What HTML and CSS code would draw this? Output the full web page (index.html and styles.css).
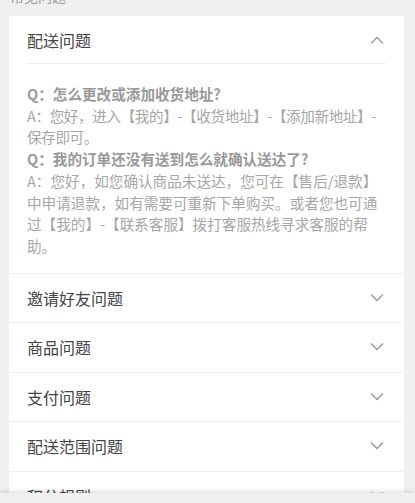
FILE: index.html
```html
<!DOCTYPE html>
<html lang="zh-CN">
<head>
    <meta charset="UTF-8">
    <meta name="viewport" content="width=device-width, initial-scale=1.0">
    <title>常见问题</title>
    <link rel="stylesheet" href="styles.css">
</head>
<body>

    <div class="page">
        <div class="section-title">常见问题</div>

        <div class="faq">
            <div class="faq-item open">
                <div class="faq-head">
                    <span>配送问题</span>
                    <svg class="arrow" viewBox="0 0 14 8"><path d="M1 7.5 L7 1.5 L13 7.5"/></svg>
                </div>
                <div class="faq-body">
                    <p class="q">Q：怎么更改或添加收货地址?</p>
                    <p class="tight">A：您好，进入【我的】-【收货地址】-【添加新地址】-保存即可。</p>
                    <p class="q">Q：我的订单还没有送到怎么就确认送达了?</p>
                    <p>A：您好，如您确认商品未送达，您可在【售后/退款】中申请退款，如有需要可重新下单购买。或者您也可通过【我的】-【联系客服】拨打客服热线寻求客服的帮助。</p>
                </div>
            </div>
            <div class="faq-item">
                <div class="faq-head">
                    <span>邀请好友问题</span>
                    <svg class="arrow" viewBox="0 0 14 8"><path d="M1 0.5 L7 6.5 L13 0.5"/></svg>
                </div>
            </div>
            <div class="faq-item">
                <div class="faq-head">
                    <span>商品问题</span>
                    <svg class="arrow" viewBox="0 0 14 8"><path d="M1 0.5 L7 6.5 L13 0.5"/></svg>
                </div>
            </div>
            <div class="faq-item">
                <div class="faq-head">
                    <span>支付问题</span>
                    <svg class="arrow" viewBox="0 0 14 8"><path d="M1 0.5 L7 6.5 L13 0.5"/></svg>
                </div>
            </div>
            <div class="faq-item">
                <div class="faq-head">
                    <span>配送范围问题</span>
                    <svg class="arrow" viewBox="0 0 14 8"><path d="M1 0.5 L7 6.5 L13 0.5"/></svg>
                </div>
            </div>
            <div class="faq-item">
                <div class="faq-head">
                    <span>积分规则</span>
                    <svg class="arrow" viewBox="0 0 14 8"><path d="M1 0.5 L7 6.5 L13 0.5"/></svg>
                </div>
            </div>
        </div>
    </div>

    <div class="footer"></div>

</body>
</html>
```

FILE: styles.css
```css
body {
    margin: 0;
    background: #f0f0f0;
    font-family: "Noto Sans CJK SC", "Noto Sans", sans-serif;
    color: #444;
    overflow: hidden;
}
.page {
    padding: 0 11px 0 9px;
}
.section-title {
    margin-top: -14px;
    height: 30px;
    line-height: 20px;
    font-size: 14px;
    color: #999;
    padding-left: 1px;
}
.faq {
    background: #fff;
}
.faq-item {
    border-bottom: 1px solid #eeeeee;
}
.faq-head {
    display: flex;
    justify-content: space-between;
    align-items: center;
    height: 48.5px;
    padding: 0 20px 0 18px;
    font-size: 16px;
}
.arrow {
    width: 14px;
    height: 8px;
    fill: none;
    stroke: #999;
    stroke-width: 1.4;
}
.open .faq-head {
    height: 47px;
    margin: 0 18px;
    padding: 0 2px 0 0;
    border-bottom: 1px solid #eeeeee;
}
.faq-body {
    padding: 19px 18px 16px 18px;
    font-size: 14.6px;
    line-height: 21.7px;
    color: #a6a6a6;
}
.faq-body p {
    margin: 0;
}
.faq-body .q {
    font-weight: bold;
    color: #999;
}
.faq-body .tight {
    letter-spacing: -0.4px;
}
.footer {
    position: fixed;
    left: 0;
    right: 0;
    bottom: 0;
    height: 10px;
    background: #f0f0f0;
    box-shadow: 0 -2px 4px rgba(0, 0, 0, 0.12);
}
```
